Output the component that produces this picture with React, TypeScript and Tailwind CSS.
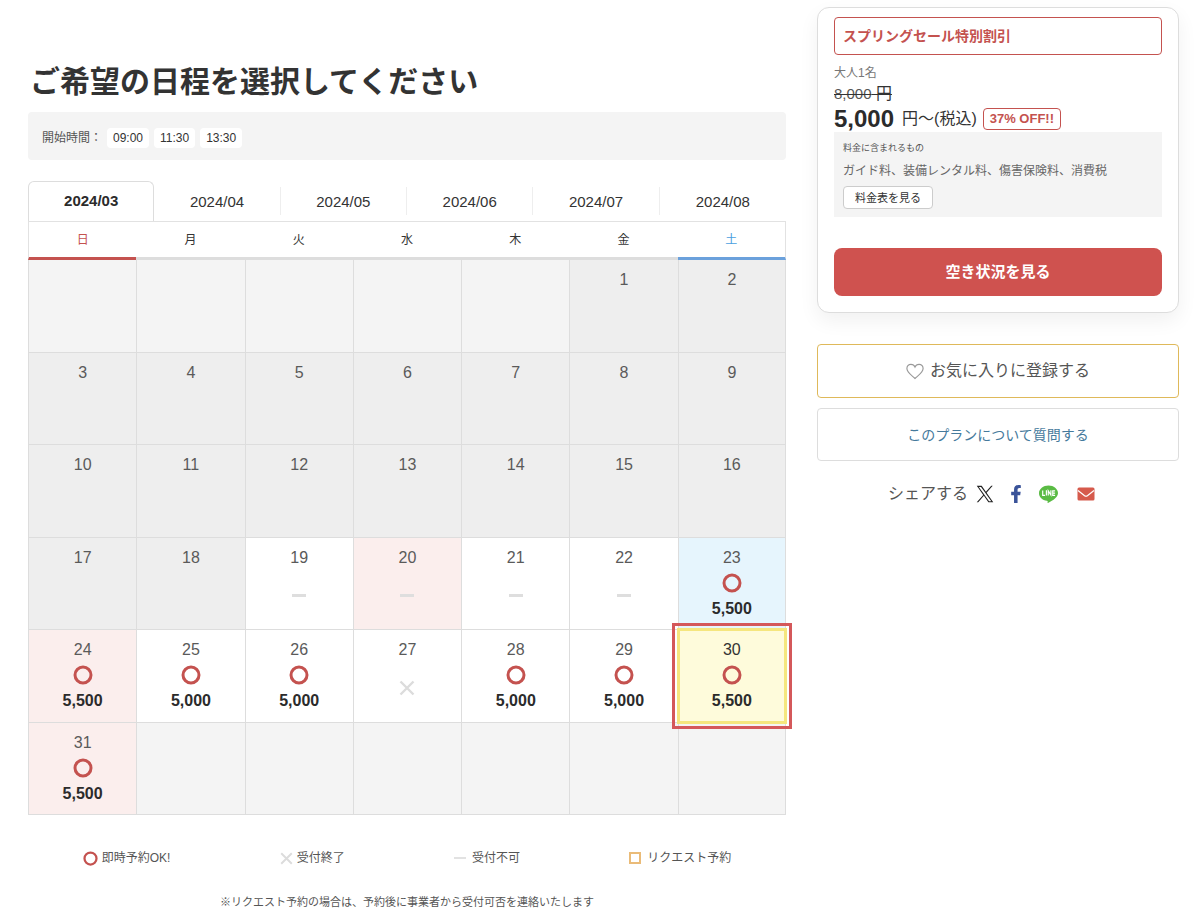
import React, { useState } from 'react'
import { FaFacebookF } from 'react-icons/fa'

type Status = 'none' | 'open' | 'closed' | 'unavailable'

interface Day {
  day: number
  status: Status
  price?: string
  tone: string
}

const startTimes = ['09:00', '11:30', '13:30']
const months = ['2024/03', '2024/04', '2024/05', '2024/06', '2024/07', '2024/08']
const weekdays = ['日', '月', '火', '水', '木', '金', '土']

const PAST = 'bg-[#eeeeee]'
const HOLIDAY = 'bg-[#fbeeed]'
const SATURDAY = 'bg-[#e6f5fd]'
const WEEKDAY = 'bg-white'

const upcoming: Day[] = [
  { day: 19, status: 'unavailable', tone: WEEKDAY },
  { day: 20, status: 'unavailable', tone: HOLIDAY },
  { day: 21, status: 'unavailable', tone: WEEKDAY },
  { day: 22, status: 'unavailable', tone: WEEKDAY },
  { day: 23, status: 'open', price: '5,500', tone: SATURDAY },
  { day: 24, status: 'open', price: '5,500', tone: HOLIDAY },
  { day: 25, status: 'open', price: '5,000', tone: WEEKDAY },
  { day: 26, status: 'open', price: '5,000', tone: WEEKDAY },
  { day: 27, status: 'closed', tone: WEEKDAY },
  { day: 28, status: 'open', price: '5,000', tone: WEEKDAY },
  { day: 29, status: 'open', price: '5,000', tone: WEEKDAY },
  { day: 30, status: 'open', price: '5,500', tone: SATURDAY },
  { day: 31, status: 'open', price: '5,500', tone: HOLIDAY },
]

const past: Day[] = Array.from({ length: 18 }, (_, i) => ({ day: i + 1, status: 'none', tone: PAST }))

// March 2024 starts on a Friday
const cells: (Day | null)[] = [...Array(5).fill(null), ...past, ...upcoming, ...Array(6).fill(null)]
const weeks = Array.from({ length: 6 }, (_, i) => cells.slice(i * 7, i * 7 + 7))

function CircleIcon({ className }: { className: string }) {
  return (
    <svg viewBox="0 0 20 20" className={className} fill="none" stroke="#c4524f" strokeWidth="3" aria-hidden="true">
      <circle cx="10" cy="10" r="8" />
    </svg>
  )
}

function CrossIcon({ className }: { className: string }) {
  return (
    <svg viewBox="0 0 16 16" className={className} fill="none" stroke="#dcdcdc" strokeWidth="2.4" aria-hidden="true">
      <path d="M1.5 1.5l13 13M14.5 1.5l-13 13" />
    </svg>
  )
}

function DayCell({ item, selected, onSelect }: { item: Day; selected: boolean; onSelect: () => void }) {
  if (item.status === 'open') {
    return (
      <button
        type="button"
        onClick={onSelect}
        aria-pressed={selected}
        className="flex w-full cursor-pointer flex-col items-center pt-2"
      >
        <span className={`text-base leading-6 ${selected ? 'text-[#333333]' : 'text-[#5a5a5a]'}`}>{item.day}</span>
        <CircleIcon className="mt-[3px] h-5 w-5" />
        <span className="mt-1 text-base leading-6 font-bold text-[#2b2b2b]">{item.price}</span>
      </button>
    )
  }

  return (
    <div className="flex flex-col items-center pt-2">
      <span className="text-base leading-6 text-[#5a5a5a]">{item.day}</span>
      <span className="mt-[18px] flex h-4 items-center">
        {item.status === 'unavailable' && <span className="h-[3px] w-[14px] bg-[#dedede]"></span>}
        {item.status === 'closed' && <CrossIcon className="h-4 w-4" />}
      </span>
    </div>
  )
}

function Calendar() {
  const [month, setMonth] = useState('2024/03')
  const [selectedDay, setSelectedDay] = useState(30)

  return (
    <section>
      {/* Month tabs */}
      <div role="tablist" className="mt-[21px] grid h-10 grid-cols-6 items-stretch">
        {months.map((m, index) => (
          <button
            key={m}
            type="button"
            role="tab"
            aria-selected={m === month}
            onClick={() => setMonth(m)}
            className={`cursor-pointer text-[15px] ${
              m === month
                ? 'rounded-t-md border border-b-0 border-[#dddddd] bg-white font-bold text-[#2b2b2b]'
                : 'my-[6px] pt-[2px] text-[#333333]'
            } ${m !== month && index < months.length - 1 ? 'border-r border-[#eeeeee]' : ''}`}
          >
            {m}
          </button>
        ))}
      </div>

      {/* Days */}
      <table className="h-[594px] w-full table-fixed border-separate border-spacing-0 border-t border-[#e2e2e2]">
        <thead>
          <tr className="h-[38px]">
            {weekdays.map((name, index) => (
              <th
                key={name}
                scope="col"
                className={`border-b-[3px] p-0 text-xs font-normal ${
                  index === 0
                    ? 'border-l border-l-[#e2e2e2] border-b-[#c4524f] text-[#c4524f]'
                    : index === 6
                      ? 'border-r border-r-[#e2e2e2] border-b-[#6ba1dc] text-[#4a9fe0]'
                      : 'border-b-[#dddddd] text-[#333333]'
                }`}
              >
                {name}
              </th>
            ))}
          </tr>
        </thead>
        <tbody>
          {weeks.map((week, row) => (
            <tr key={row} className="h-[92px]">
              {week.map((item, col) => {
                const selected = item?.day === selectedDay
                return (
                  <td
                    key={col}
                    className={`relative border-b border-l border-[#dddddd] p-0 align-top ${col === 6 ? 'border-r' : ''} ${
                      selected ? 'z-10 bg-[#fefbdb]' : item ? item.tone : 'bg-[#f4f4f4]'
                    }`}
                  >
                    {item && (
                      <DayCell item={item} selected={selected} onSelect={() => setSelectedDay(item.day)} />
                    )}
                    {selected && (
                      <>
                        <span className="pointer-events-none absolute -inset-[2px] border-[3px] border-[#f5e67e]"></span>
                        <span className="pointer-events-none absolute -inset-[7px] border-[3px] border-[#d4585a]"></span>
                      </>
                    )}
                  </td>
                )
              })}
            </tr>
          ))}
        </tbody>
      </table>

      {/* Legend */}
      <ul className="mt-[33px] flex justify-around text-xs leading-5 text-[#555555]">
        <li className="flex items-center gap-1">
          <CircleIcon className="h-[15px] w-[15px]" />
          即時予約OK!
        </li>
        <li className="flex items-center gap-1">
          <CrossIcon className="h-[13px] w-[13px]" />
          受付終了
        </li>
        <li className="flex items-center gap-[6px]">
          <span className="h-[2px] w-3 bg-[#e2e2e2]"></span>
          受付不可
        </li>
        <li className="flex items-center gap-[6px]">
          <span className="h-3 w-3 border-2 border-[#eabb78]"></span>
          リクエスト予約
        </li>
      </ul>
      <p className="mt-6 text-center text-[11px] leading-5 text-[#555555]">
        ※リクエスト予約の場合は、予約後に事業者から受付可否を連絡いたします
      </p>
    </section>
  )
}

function PriceCard() {
  return (
    <div className="rounded-xl border border-[#dddddd] bg-white px-4 pt-[9px] pb-4 shadow-[0_8px_20px_rgba(0,0,0,0.06)]">
      <p className="rounded-sm border border-[#c4524f] px-2 py-2 text-sm leading-5 font-bold text-[#c4524f]">
        スプリングセール特別割引
      </p>
      <p className="mt-[9px] text-xs leading-[18px] text-[#777777]">大人1名</p>
      <p className="leading-6 text-[#333333] line-through">
        <span className="text-[15px] text-[#555555]">8,000</span> 円
      </p>
      <div className="flex h-[26px] items-center">
        <span className="text-2xl leading-7 font-bold text-[#2b2b2b]">5,000</span>
        <span className="ml-2 text-base leading-7 text-[#333333]">円〜(税込)</span>
        <span className="ml-[6px] rounded-sm border border-[#c4524f] px-[6px] text-[13px] leading-5 font-bold text-[#c4524f]">
          37% OFF!!
        </span>
      </div>
      <div className="bg-[#f4f4f4] px-[9px] py-2">
        <p className="text-[9px] leading-4 text-[#555555]">料金に含まれるもの</p>
        <p className="mt-[5px] text-xs leading-5 text-[#666666]">ガイド料、装備レンタル料、傷害保険料、消費税</p>
        <button
          type="button"
          className="mt-[5px] block h-[23px] cursor-pointer rounded-sm border border-[#cccccc] bg-white px-[11px] text-[11px] leading-5 text-[#333333]"
        >
          料金表を見る
        </button>
      </div>
      <button
        type="button"
        className="mt-[31px] h-12 w-full cursor-pointer rounded-lg bg-[#cf524f] text-[15px] font-bold text-white"
      >
        空き状況を見る
      </button>
    </div>
  )
}

function ShareLinks() {
  return (
    <div className="mt-[21px] flex items-center pl-[71px]">
      <span className="text-base leading-6 text-[#555555]">シェアする</span>
      <a href="#x" aria-label="X" className="ml-2">
        <svg viewBox="0 0 24 24" className="h-[18px] w-[18px]" fill="#222222" aria-hidden="true">
          <path d="M14.1 10.3 22.3 1h-2l-7.1 8.1L7.6 1H1l8.6 12.2L1 23h2l7.5-8.6 6 8.6H23ZM11.4 13.3l-.9-1.2L3.7 2.5h3l5.6 7.8.9 1.2 7.2 10.1h-3Z" />
        </svg>
      </a>
      <a href="#facebook" aria-label="Facebook" className="ml-[13px]">
        <FaFacebookF className="h-[18px] w-[18px] text-[#3a5399]" />
      </a>
      <a href="#line" aria-label="LINE" className="ml-[14px]">
        <svg viewBox="0 0 36 34" className="h-[18px] w-[19px]" aria-hidden="true">
          <path
            d="M18 1C8.1 1 0 7.5 0 15.5c0 7.2 6.4 13.200 15 14.3 2 .4 1.5 1.6 1.2 3.7-.1.5.4.7.9.4C20 32.4 36 25 36 15.5 36 7.5 27.9 1 18 1Z"
            fill="#5abb44"
          />
          <g fill="none" stroke="#ffffff" strokeWidth="2.2">
            <path d="M7 10.5v9h4.5M14 10v10M17.5 20v-9l5 8v-9M30.5 11H26v8.500h4.500M26 15.200h4.500" />
          </g>
        </svg>
      </a>
      <a href="#mail" aria-label="メール" className="ml-[19px]">
        <svg viewBox="0 0 18 14" className="h-[14px] w-[18px]" aria-hidden="true">
          <rect x="0.5" y="0.5" width="17" height="13" rx="1.5" fill="#d65a4c" />
          <path d="M1 3.500 7.600 8.700q1.400 1 2.800 0L17 3.500" fill="none" stroke="#ffffff" strokeWidth="1.2" />
        </svg>
      </a>
    </div>
  )
}

export default function App() {
  return (
    <div className="flex items-start gap-[31px] bg-white pr-[21px] pl-7 font-['Liberation_Sans','Noto_Sans_CJK_JP',sans-serif]">
      <main className="min-w-0 flex-1 pt-[60px]">
        <h1 className="px-[2px] text-[30px] leading-[44px] font-bold text-[#333333]">ご希望の日程を選択してください</h1>
        <div className="mt-2 flex h-12 items-center rounded-sm bg-[#f4f4f4] px-[14px] pt-1 text-xs text-[#555555]">
          <span>開始時間：</span>
          <ul className="ml-[5px] flex gap-[5px]">
            {startTimes.map((time) => (
              <li key={time} className="rounded bg-white px-[6px] leading-5 text-[#333333]">
                {time}
              </li>
            ))}
          </ul>
        </div>
        <Calendar />
      </main>

      <aside className="w-[362px] shrink-0 pt-[7px]">
        <PriceCard />
        <button
          type="button"
          className="mt-[31px] flex h-[54px] w-full cursor-pointer items-center justify-center gap-[6px] rounded-sm border border-[#dfb95a] text-base text-[#555555]"
        >
          <svg viewBox="0 0 20 18" className="h-[17px] w-[18px]" fill="none" stroke="#999999" strokeWidth="1.3" aria-hidden="true">
            <path d="M10 16.8C7 13.8 1 10.3 1 5.8 1 3 3 1 5.5 1 7.4 1 9.2 2.1 10 4c.8-1.9 2.600-3 4.500-3C17 1 19 3 19 5.8c0 4.500-6 8-9 11Z" />
          </svg>
          お気に入りに登録する
        </button>
        <a
          href="#question"
          className="mt-[10px] flex h-[53px] items-center justify-center rounded-sm border border-[#dddddd] text-sm text-[#457a9c]"
        >
          このプランについて質問する
        </a>
        <ShareLinks />
      </aside>
    </div>
  )
}
